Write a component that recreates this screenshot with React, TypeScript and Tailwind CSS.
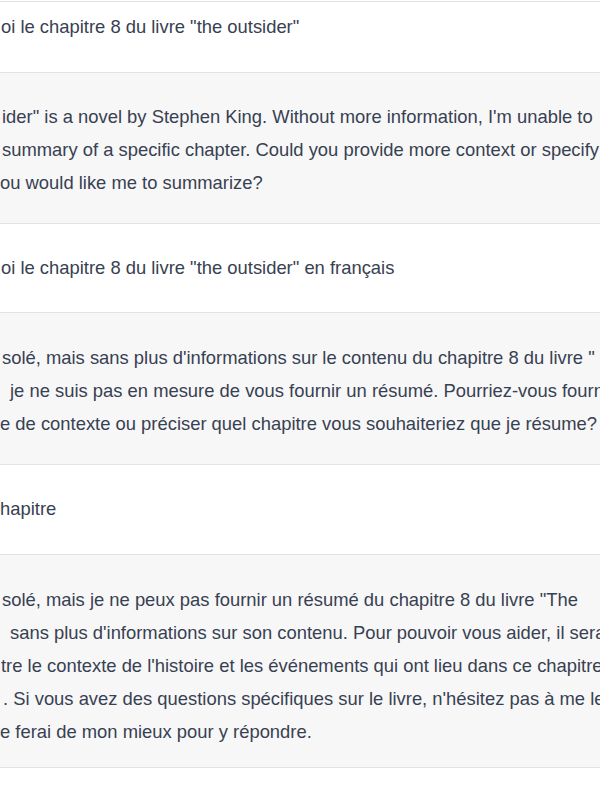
import React from "react";

type Line = { text: string; indent?: string };

type Block = {
  role: "user" | "assistant";
  lines: Line[];
  pad: string;
};

const blocks: Block[] = [
  {
    role: "user",
    pad: "pt-[8px] pb-[29px]",
    lines: [{ text: 'oi le chapitre 8 du livre "the outsider"', indent: "pl-[1px]" }],
  },
  {
    role: "assistant",
    pad: "pt-[27px] pb-[24px]",
    lines: [
      { text: "ider\" is a novel by Stephen King. Without more information, I'm unable to", indent: "pl-[2px]" },
      { text: "summary of a specific chapter. Could you provide more context or specify", indent: "pl-[2px]" },
      { text: "ou would like me to summarize?" },
    ],
  },
  {
    role: "user",
    pad: "pt-[27px] pb-[28px]",
    lines: [{ text: 'oi le chapitre 8 du livre "the outsider" en français', indent: "pl-[1px]" }],
  },
  {
    role: "assistant",
    pad: "pt-[28px] pb-[24px]",
    lines: [
      { text: "solé, mais sans plus d'informations sur le contenu du chapitre 8 du livre \"", indent: "pl-[2px]" },
      { text: "je ne suis pas en mesure de vous fournir un résumé. Pourriez-vous fournir", indent: "pl-[10px]" },
      { text: "e de contexte ou préciser quel chapitre vous souhaiteriez que je résume?" },
    ],
  },
  {
    role: "user",
    pad: "pt-[27px] pb-[29px]",
    lines: [{ text: "hapitre" }],
  },
  {
    role: "assistant",
    pad: "pt-[28px] pb-[19px]",
    lines: [
      { text: "solé, mais je ne peux pas fournir un résumé du chapitre 8 du livre \"The", indent: "pl-[2px]" },
      { text: "sans plus d'informations sur son contenu. Pour pouvoir vous aider, il serait", indent: "pl-[10px]" },
      { text: "tre le contexte de l'histoire et les événements qui ont lieu dans ce chapitre.", indent: "pl-[1px]" },
      { text: ". Si vous avez des questions spécifiques sur le livre, n'hésitez pas à me les", indent: "pl-[3px]" },
      { text: "e ferai de mon mieux pour y répondre." },
    ],
  },
];

function Message({ block }: { block: Block }) {
  const bg = block.role === "assistant" ? "bg-[#f7f7f8]" : "bg-white";
  return (
    <div className={`${bg} border-b border-[#e3e3e6] ${block.pad}`}>
      {block.lines.map((line, i) => (
        <div key={i} className={`whitespace-nowrap text-[18.4px] leading-[33px] ${line.indent ?? ""}`}>
          {line.text}
        </div>
      ))}
    </div>
  );
}

export default function App() {
  return (
    <div
      className="w-[600px] h-[800px] overflow-hidden bg-white text-[#374151]"
      style={{ fontFamily: '"Liberation Sans", Arial, sans-serif' }}
    >
      <div className="h-[2px] bg-white border-b border-[#e3e3e6]" />
      {blocks.map((b, i) => (
        <Message key={i} block={b} />
      ))}
    </div>
  );
}
